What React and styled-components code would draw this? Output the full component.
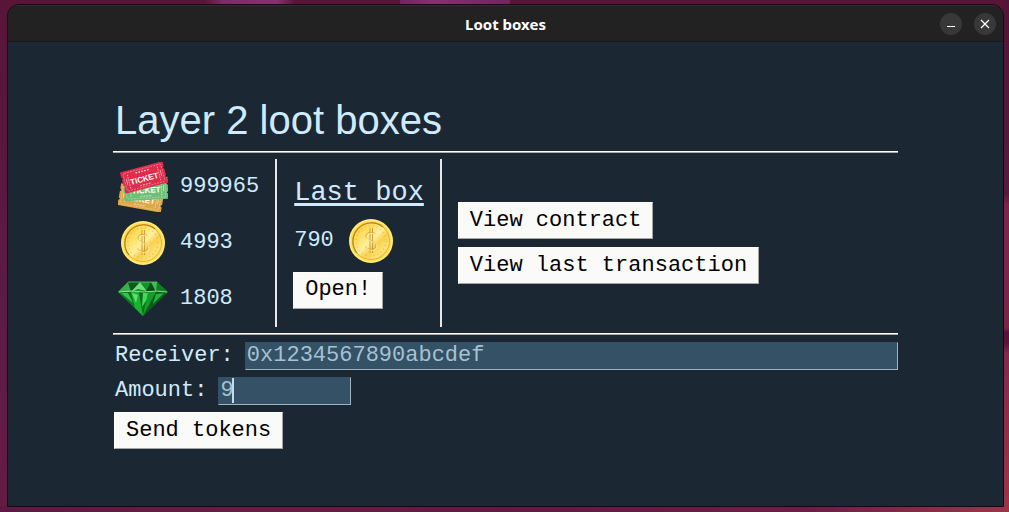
import React, { useState } from "react";
import styled, { createGlobalStyle } from "styled-components";

const GlobalStyle = createGlobalStyle`
  * { box-sizing: border-box; }
  html, body, #root { height: 100%; }
  body { margin: 0; }
`;

const mono = `"Liberation Mono", "Courier New", monospace`;

const Desktop = styled.div`
  min-height: 100%;
  display: flex;
  padding: 4px 5px 5px 7px;
  background:
    linear-gradient(90deg, transparent, #7a2d66 20%, #83326f 80%, transparent) 205px 0 / 90px 4px no-repeat,
    linear-gradient(90deg, #702660, #83326f 30%, #702660) 400px 0 / 110px 4px no-repeat,
    linear-gradient(180deg, #521537 0, #5a193c 38%, #7d2548 40%, #7a2446 64%, #5a103c 65%, #5c123c 67%, #83294a 69%, #9c3449 100%) 100% 0 / 6px 100% no-repeat,
    linear-gradient(90deg, #5c1a42 0, #6a1c45 25%, #641843 50%, #6d1d48 80%, #9c3449 100%) 0 100% / 100% 6px no-repeat,
    linear-gradient(180deg, #581538, #5c1b47 60%, #651c45);
`;

const Window = styled.section`
  flex: 1;
  display: flex;
  flex-direction: column;
  border: 1px solid #150a14;
  border-radius: 12px 12px 0 0;
  background: #1b2834;
  overflow: hidden;
`;

const TitleBar = styled.header`
  display: grid;
  grid-template-columns: 1fr auto 1fr;
  align-items: center;
  height: 37px;
  padding: 0 7px;
  background: #222;
  border-top: 1px solid #303030;
  border-bottom: 1px solid #141a20;
`;

const WindowName = styled.div`
  grid-column: 2;
  font: bold 15px/20px "Noto Sans", "Open Sans", sans-serif;
  color: #fff;
`;

const WindowControls = styled.div`
  display: flex;
  justify-content: flex-end;
  gap: 12px;
`;

const RoundButton = styled.button`
  display: grid;
  place-items: center;
  width: 22px;
  height: 22px;
  padding: 0;
  border: 0;
  border-radius: 50%;
  background: #383838;
`;

const Content = styled.main`
  padding: 55px 105px;
  font: 22px/26px ${mono};
  color: #d0ebff;
`;

const Heading = styled.h1`
  margin: 0;
  padding: 0 2px 8px;
  font: 40px/46px "Liberation Sans", Arial, sans-serif;
  color: #d0ebff;
`;

const Panels = styled.div`
  display: flex;
  padding: 6px 0;
  border: 2px ridge #fff;
  border-width: 2px 0;
`;

const Panel = styled.section`
  display: flex;
  flex-direction: column;
  justify-content: center;
  align-items: flex-start;
  gap: ${(p) => p.$gap || 0}px;
  min-height: 168px;
  padding: 0 16px;
  & + & { border-left: 2px solid #e4e8ea; }
`;

const BalancePanel = styled(Panel)`
  padding-left: 5px;
`;

const Balance = styled.div`
  display: flex;
  align-items: center;
  gap: 12px;
  height: 56px;
`;

const Prize = styled.div`
  display: flex;
  align-items: center;
  gap: 12px;
  height: 50px;
  padding-left: 1px;
`;

const PanelTitle = styled.h2`
  margin: 0;
  padding: 0 0 2px 1px;
  font: 27px/30px ${mono};
  text-decoration: underline;
  text-decoration-thickness: 3px;
  text-underline-offset: 3px;
`;

const ActionButton = styled.button`
  height: 37px;
  padding: 0 11px;
  border: 1px solid;
  border-color: #fff #a3a5a5 #a3a5a5 #fff;
  background: #fafaf8;
  color: #000;
  font: 22px/26px ${mono};
`;

const Form = styled.form`
  display: flex;
  flex-direction: column;
  align-items: flex-start;
  gap: 7px;
  padding: 7px 0 0 1px;
`;

const Field = styled.div`
  display: flex;
  align-self: stretch;
  gap: 11px;
  padding-left: 1px;
  line-height: 28px;
`;

const InputWrap = styled.span`
  position: relative;
  display: flex;
  flex: ${(p) => (p.$wide ? 1 : "none")};
`;

const TextInput = styled.input`
  width: ${(p) => (p.$wide ? "100%" : "133px")};
  height: 28px;
  padding: 0 1px 1px;
  border: 1px solid;
  border-color: #345165 #9fb4c0 #9fb4c0 #345165;
  border-radius: 0;
  outline: 0;
  background: #345165;
  color: #a5c2d4;
  font: 22px/26px ${mono};
`;

const Caret = styled.i`
  position: absolute;
  top: 1px;
  left: 14px;
  width: 2px;
  height: 25px;
  background: #c3dcea;
`;

function Ticket({ transform, fill }) {
  return (
    <g transform={transform}>
      <path
        d="M-22 -11H22V-6L20.5 -4.5L22 -3V3L20.5 4.5L22 6V11H-22V6L-20.5 4.5L-22 3V-3L-20.5 -4.5L-22 -6Z"
        fill={fill}
      />
      <rect x="-19.5" y="-9" width="39" height="18" rx="1.5" fill="none" stroke="#fff" strokeOpacity=".45" strokeWidth=".7" strokeDasharray="2 1" />
      <path d="M-15.500 -7V7M15.500 -7V7" stroke="#fff" strokeOpacity=".6" strokeDasharray="1.5 1" />
      <path d="M-17.5 -3V3M17.5 -3V3" stroke="#fff" strokeOpacity=".5" />
      <path d="M-7 -6.500H7" stroke="#fff" strokeOpacity=".85" strokeWidth="1.4" strokeDasharray="1.5 1.5" />
      <path d="M-6 7H6" stroke="#fff" strokeOpacity=".6" strokeDasharray="2 1" />
      <text y="4" textAnchor="middle" fill="#fff" fontFamily="Liberation Sans Narrow, Liberation Sans, sans-serif" fontWeight="bold" fontSize="8">
        TICKET
      </text>
    </g>
  );
}

function Tickets() {
  return (
    <svg width="50" height="50" viewBox="0 0 50 50" aria-hidden="true">
      <Ticket transform="translate(23 36) rotate(10)" fill="#dda746" />
      <Ticket transform="translate(28 27) rotate(-3)" fill="#6dbf78" />
      <Ticket transform="translate(26 15.500) rotate(-15)" fill="#df2c4c" />
    </svg>
  );
}

function Coin({ id }) {
  return (
    <svg width="50" height="50" viewBox="0 0 50 50" aria-hidden="true">
      <defs>
        <linearGradient id={id} x1="0" y1="0" x2="1" y2="1">
          <stop offset="0" stopColor="#f5c434" />
          <stop offset=".3" stopColor="#ffdf62" />
          <stop offset=".5" stopColor="#fff0a0" />
          <stop offset=".62" stopColor="#f9d050" />
          <stop offset=".8" stopColor="#ffe478" />
          <stop offset="1" stopColor="#f0bd38" />
        </linearGradient>
      </defs>
      <circle cx="25" cy="25" r="22" fill="#ffdf52" />
      <circle cx="25" cy="25" r="21" fill="none" stroke="#fff09a" />
      <circle cx="25" cy="25" r="18.500" fill={`url(#${id})`} stroke="#e0a926" strokeWidth=".8" />
      <path d="M11 37A18.500 18.500 0 0 1 37 11" fill="none" stroke="#b98620" strokeWidth="1.200" />
      <circle cx="25" cy="25" r="15" fill="none" stroke="#c79526" strokeOpacity=".4" strokeWidth="1.500" strokeDasharray="1 3" />
      <path d="M30 18.500C28 15 20 15.500 20 20S30 24.500 30 29.500S21 34.500 19.500 30.500M24 12V37M26.500 12V37" fill="none" stroke="#c99a30" strokeWidth=".9" />
      <path d="M31 19.500C29 16 21 16.500 21 21S31 25.500 31 30.500S22 35.500 20.500 31.500" fill="none" stroke="#fff6b8" strokeWidth=".8" />
    </svg>
  );
}

function Gem() {
  return (
    <svg width="50" height="50" viewBox="0 0 50 50" aria-hidden="true">
      <path d="M10 8H39L50 18L25 42L0 18Z" fill="#16942b" />
      <path d="M10 8L0 18H13Z" fill="#39ae49" />
      <path d="M10 8H22L13 18Z" fill="#0c5b1b" />
      <path d="M22 8L13 18L20 15L29 17Z" fill="#72dd78" />
      <path d="M22 8H33L28 16Z" fill="#129328" />
      <path d="M33 8L28 17H38Z" fill="#0a4c16" />
      <path d="M33 8H39L43 13L38 18Z" fill="#3fbf4f" />
      <path d="M39 8L50 18H38Z" fill="#107d24" />
      <path d="M0 18H13L17 34Z" fill="#0c7520" />
      <path d="M3 19H10L15 29Z" fill="#32c545" />
      <path d="M13 18H21L25 42L17 34Z" fill="#19b232" />
      <path d="M14 19L20 21L18 29Z" fill="#65df70" />
      <path d="M21 18H30L25 42Z" fill="#0c6d1c" />
      <path d="M25 19H33L24 33Z" fill="#48d859" />
      <path d="M30 18H38L25 42Z" fill="#139d2a" />
      <path d="M38 18H50L25 42Z" fill="#0a5c18" />
      <path d="M38 20L46 19L35 30Z" fill="#24b43a" />
      <path d="M1 18L13 17L25 18L38 17L49 18" fill="none" stroke="#a4f0a7" strokeWidth=".8" />
      <path d="M10 8H39" stroke="#59ce68" strokeWidth=".8" />
    </svg>
  );
}

export default function App() {
  const [receiver, setReceiver] = useState("0x1234567890abcdef");
  const [amount, setAmount] = useState("9");
  return (
    <>
      <GlobalStyle />
      <Desktop>
        <Window>
          <TitleBar>
            <WindowName>Loot boxes</WindowName>
            <WindowControls>
              <RoundButton aria-label="Minimize">
                <svg width="12" height="12" viewBox="0 0 12 12">
                  <path d="M2 8.500H10" stroke="#fff" />
                </svg>
              </RoundButton>
              <RoundButton aria-label="Close">
                <svg width="12" height="12" viewBox="0 0 12 12">
                  <path d="M2 2L10 10M10 2L2 10" stroke="#fff" strokeWidth="1.300" />
                </svg>
              </RoundButton>
            </WindowControls>
          </TitleBar>
          <Content>
            <Heading>Layer 2 loot boxes</Heading>
            <Panels>
              <BalancePanel>
                <Balance><Tickets /><span>999965</span></Balance>
                <Balance><Coin id="coin-balance" /><span>4993</span></Balance>
                <Balance><Gem /><span>1808</span></Balance>
              </BalancePanel>
              <Panel $gap={6}>
                <PanelTitle>Last box</PanelTitle>
                <Prize><span>790</span><Coin id="coin-prize" /></Prize>
                <ActionButton type="button">Open!</ActionButton>
              </Panel>
              <Panel $gap={8}>
                <ActionButton type="button">View contract</ActionButton>
                <ActionButton type="button">View last transaction</ActionButton>
              </Panel>
            </Panels>
            <Form onSubmit={(e) => e.preventDefault()}>
              <Field>
                <label htmlFor="receiver">Receiver:</label>
                <InputWrap $wide>
                  <TextInput id="receiver" $wide value={receiver} onChange={(e) => setReceiver(e.target.value)} />
                </InputWrap>
              </Field>
              <Field>
                <label htmlFor="amount">Amount:</label>
                <InputWrap>
                  <TextInput id="amount" value={amount} onChange={(e) => setAmount(e.target.value)} />
                  <Caret />
                </InputWrap>
              </Field>
              <ActionButton type="submit">Send tokens</ActionButton>
            </Form>
          </Content>
        </Window>
      </Desktop>
    </>
  );
}
